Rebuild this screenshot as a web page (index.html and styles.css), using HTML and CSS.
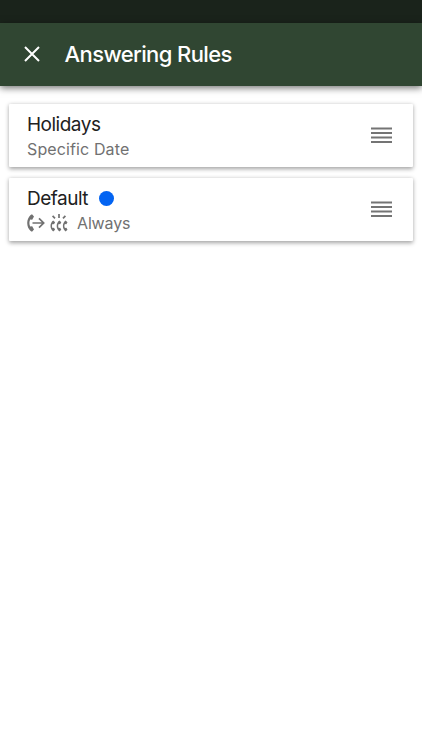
FILE: index.html
```
<!DOCTYPE html>
<html lang="en">
<head>
  <meta charset="UTF-8">
  <meta name="viewport" content="width=device-width, initial-scale=1.0">
  <title>Answering Rules</title>
  <link rel="stylesheet" href="styles.css">
</head>
<body>
  <div class="status-bar"></div>
  <header>
    <button class="close" aria-label="Close">
      <svg width="16" height="16" viewBox="0 0 16 16"><path d="M1 1L15 15M15 1L1 15"/></svg>
    </button>
    <h1>Answering Rules</h1>
  </header>
  <main class="rules">
    <div class="card">
      <div class="info">
        <h2>Holidays</h2>
        <div class="detail"><span class="specific">Specific Date</span></div>
      </div>
      <svg class="handle" width="21" height="17" viewBox="0 0 21 17"><path d="M0 1.5H21M0 6H21M0 10.5H21M0 15H21"/></svg>
    </div>
    <div class="card">
      <div class="info">
        <h2>Default <span class="dot"></span></h2>
        <div class="detail">
          <svg class="forward" width="18" height="18" viewBox="0 0 18 18">
            <path class="phone" d="M3.6 1C-.9 5-.9 13 3.6 17L5 17.8L7 15.4L5.2 12.2L3.2 12.6C2.1 10.4 2.1 7.6 3.2 5.4L5.2 5.8L7 2.6L5 .2Z"/>
            <path class="line" d="M5.5 9H16.4M12 4.3L16.7 9L12 13.7"/>
          </svg>
          <svg class="ring" width="18" height="18" viewBox="0 0 18 18">
            <path class="line" d="M9 0V4M2.6 1.8L5 4.4M15.4 1.8L13 4.4"/>
            <g id="handset">
              <path class="phone" d="M3.2 6.6C-.4 9.1-.4 14.9 3.2 17.4L5.1 15.8L4 13.7L2.5 13.9C1.8 12.7 1.8 11.3 2.5 10.1L4 10.3L5.1 8.2Z"/>
            </g>
            <use href="#handset" x="6.2"/>
            <use href="#handset" x="12.4"/>
          </svg>
          <span class="always">Always</span>
        </div>
      </div>
      <svg class="handle" width="21" height="17" viewBox="0 0 21 17"><path d="M0 1.5H21M0 6H21M0 10.5H21M0 15H21"/></svg>
    </div>
  </main>
</body>
</html>
```
FILE: styles.css
```
body {
  font-family: Inter, "Liberation Sans", sans-serif;
  margin: 0;
  padding: 0;
  background-color: #fff;
  color: #212121;
}
.status-bar {
  height: 23px;
  background-color: #1a231b;
}
header {
  display: flex;
  align-items: center;
  height: 62.5px;
  padding-left: 24px;
  background-color: #304632;
  color: white;
  box-shadow: 0 2px 7px rgba(0,0,0,0.55);
}
.close {
  display: flex;
  padding: 0;
  border: none;
  background: none;
  cursor: pointer;
}
.close svg {
  fill: none;
  stroke: #fff;
  stroke-width: 2;
}
h1 {
  margin: 0 0 0 24.5px;
  font-size: 22px;
  line-height: 28px;
  font-weight: 450;
  letter-spacing: -0.6px;
}
.rules {
  display: grid;
  gap: 11px;
  padding: 18px 9px;
}
.card {
  box-sizing: border-box;
  display: flex;
  align-items: center;
  justify-content: space-between;
  height: 63px;
  padding: 0 21px 0 18px;
  background-color: white;
  border-radius: 1px;
  box-shadow: 0 1.5px 4px rgba(0,0,0,0.36);
}
.info {
  padding-top: 3px;
}
h2 {
  display: flex;
  align-items: center;
  margin: 0;
  font-size: 19px;
  line-height: 25px;
  font-weight: 400;
  letter-spacing: -0.5px;
}
.dot {
  width: 15px;
  height: 15px;
  margin-left: 11px;
  border-radius: 50%;
  background-color: #0364f2;
}
.detail {
  display: flex;
  align-items: center;
  height: 24px;
  font-size: 16px;
  color: #717171;
}
.specific {
  letter-spacing: 0.12px;
}
.always {
  letter-spacing: -0.15px;
}
.forward {
  margin-right: 5px;
}
.ring {
  margin-right: 9px;
}
.phone {
  fill: #717171;
}
.line {
  fill: none;
  stroke: #717171;
  stroke-width: 1.7;
}
.handle {
  fill: none;
  stroke: #747474;
  stroke-width: 2.2;
}
```
